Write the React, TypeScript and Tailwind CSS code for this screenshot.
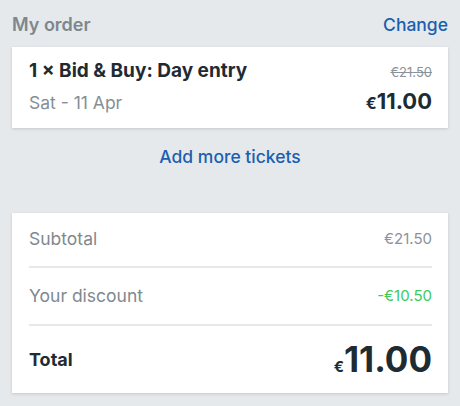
import React from 'react';

const font = { fontFamily: 'Inter, "Noto Sans", sans-serif' };

const Row: React.FC<{ label: string; value: string; valueClass: string; h: string }> = ({ label, value, valueClass, h }) => (
    <div className={`flex items-center justify-between ${h}`}>
        <span className="text-[17.5px] text-[#7f898f]">{label}</span>
        <span className={`text-[15px] ${valueClass}`}>{value}</span>
    </div>
);

export default function App() {
    return (
        <div className="min-h-[406px] bg-[#e5e9ec] px-3 pt-[13px]" style={font}>
            <div className="flex items-center justify-between leading-6">
                <h2 className="text-[18px] font-semibold text-[#7d878d]">My order</h2>
                <button className="text-[17.5px] font-medium text-[#1b5fb0]">Change</button>
            </div>

            <div className="mt-[10px] bg-white pl-[17px] pr-[16px] pt-[12px] pb-[13px] shadow-[0_1px_3px_rgba(0,0,0,0.14)]">
                <div className="flex items-baseline justify-between leading-6">
                    <p className="text-[19px] font-bold text-[#1f2b33]">1 × Bid &amp; Buy: Day entry</p>
                    <p className="text-[13px] text-[#8a9399] line-through">€21.50</p>
                </div>
                <div className="mt-[5px] flex items-baseline justify-between leading-6">
                    <p className="text-[17.5px] text-[#858f95]">Sat - 11 Apr</p>
                    <p className="font-bold text-[#1f2b33]">
                        <span className="text-[16px]">€</span>
                        <span className="text-[22px]">11.00</span>
                    </p>
                </div>
            </div>

            <div className="mt-[17px] text-center leading-6">
                <button className="text-[17.5px] font-medium text-[#1b5fb0]">Add more tickets</button>
            </div>

            <div className="mt-[44px] bg-white pl-[17px] pr-[16px] shadow-[0_1px_3px_rgba(0,0,0,0.14)]">
                <Row label="Subtotal" value="€21.50" valueClass="text-[#8a9399]" h="h-[53px]" />
                <div className="h-[2px] bg-[#e5e9ec]" />
                <Row label="Your discount" value="-€10.50" valueClass="text-[#3ccb5c]" h="h-[56px]" />
                <div className="h-[2px] bg-[#e5e9ec]" />
                <div className="flex h-[67px] items-center justify-between">
                    <span className="text-[18px] font-bold text-[#1f2b33]">Total</span>
                    <p className="font-bold text-[#1f2b33] leading-none">
                        <span className="text-[15px]">€</span>
                        <span className="text-[35px]">11.00</span>
                    </p>
                </div>
            </div>
        </div>
    );
}
